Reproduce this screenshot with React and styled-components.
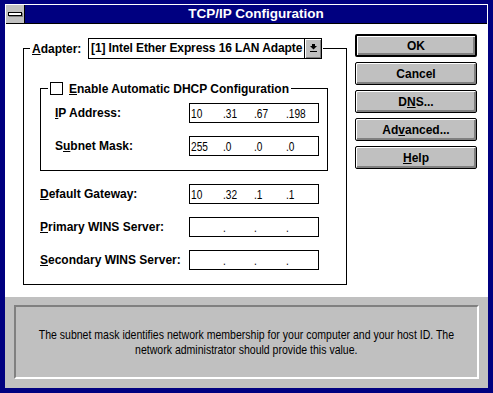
import React from 'react'
import styled, {createGlobalStyle} from 'styled-components'

const GlobalStyle = createGlobalStyle`
  html, body {
    margin: 0;
    padding: 0;
    background: #000080;
  }
  body {
    font-family: "Liberation Sans", Arial, sans-serif;
  }
`

const Window = styled.div`
  width: 493px;
  height: 393px;
  box-sizing: border-box;
  border: 5px solid #000080;
  border-top-width: 4px;
  background: #fff;
  display: flex;
  flex-direction: column;
  overflow: hidden;
`

// Title bar

const TitleBar = styled.div`
  display: flex;
  height: 18px;
  margin: 1px 1px 0 1px;
  border-bottom: 1px solid #000;
`

const SysMenu = styled.div`
  width: 18px;
  background: #c0c0c0;
  border-right: 1px solid #000;
  display: flex;
  align-items: center;
  justify-content: center;
`

const SysBar = styled.span`
  width: 12px;
  height: 2px;
  background: #fff;
  border: 1px solid #000;
  box-shadow: 1px 1px 0 #808080;
`

const Title = styled.div`
  flex: 1;
  background: #000080;
  color: #fff;
  font-weight: bold;
  font-size: 13.5px;
  line-height: 18px;
  text-align: center;
`

// Body

const Body = styled.div`
  flex: 1;
  display: flex;
  align-items: flex-start;
  padding: 10px 11px 0 18px;
  gap: 8px;
`

const Group = styled.fieldset`
  margin: ${p => p.$top || 0}px 0 0 0;
  padding: 0;
  border: 1px solid #000;
  min-width: 0;
  width: ${p => p.$width}px;
  box-sizing: border-box;
`

const Legend = styled.legend`
  margin-left: ${p => p.$indent}px;
  padding: 0 ${p => p.$padRight || 1}px 0 2px;
`

const LegendRow = styled.span`
  display: flex;
  align-items: center;
  height: ${p => p.$height}px;
`

const GroupContent = styled.div`
  display: flex;
  flex-direction: column;
  gap: ${p => p.$gap}px;
  padding: ${p => p.$pad};
`

const Label = styled.span`
  font-weight: bold;
  font-size: 12px;
  color: #000;
  white-space: nowrap;
  width: ${p => (p.$width ? `${p.$width}px` : 'auto')};
  flex-shrink: 0;
`

const Combo = styled.div`
  display: flex;
  width: 234px;
  height: 21px;
  box-sizing: border-box;
  border: 1px solid #000;
  background: #fff;
`

const ComboText = styled.div`
  flex: 1;
  overflow: hidden;
  white-space: nowrap;
  font-weight: bold;
  font-size: 12px;
  letter-spacing: -0.1px;
  line-height: 19px;
  padding-left: 2px;
`

const DropButton = styled.div`
  width: 16px;
  border-left: 1px solid #000;
  background: #c0c0c0;
  box-shadow: inset 1px 1px 0 #fff, inset -1px -1px 0 #808080;
  display: flex;
  align-items: center;
  justify-content: center;
`

const CheckBox = styled.span`
  width: 13px;
  height: 13px;
  box-sizing: border-box;
  border: 1px solid #000;
  background: #fff;
  margin-right: 6px;
`

const FieldRow = styled.div`
  display: flex;
  align-items: center;
  height: 20px;
`

const AddressBox = styled.div`
  display: flex;
  align-items: center;
  width: 130px;
  height: 20px;
  box-sizing: border-box;
  border: 1px solid #000;
  background: #fff;
  padding-left: 1px;
`

const Octet = styled.span`
  width: 31.5px;
  flex-shrink: 0;
  white-space: pre;
`

// Arial Narrow is not installed, so the regular face is squeezed
const NarrowText = styled.span`
  display: inline-block;
  font-size: ${p => p.$size || 12.5}px;
  color: #000;
  white-space: pre;
  transform: scaleX(0.81);
  transform-origin: ${p => p.$origin || 'left'} center;
`

// Buttons

const ButtonColumn = styled.div`
  display: flex;
  flex-direction: column;
  gap: 5px;
  width: 122px;
`

const Button = styled.div`
  height: 23px;
  box-sizing: border-box;
  border: ${p => (p.$default ? 2 : 1)}px solid #000;
  border-radius: 2px;
  background: #c0c0c0;
  box-shadow: inset 1px 1px 0 #fff, inset -2px -2px 0 #808080;
  display: flex;
  align-items: center;
  justify-content: center;
  font-weight: bold;
  font-size: 12px;
  color: #000;
`

// Status panel

const StatusPanel = styled.div`
  height: 91px;
  box-sizing: border-box;
  background: #c0c0c0;
  padding: 8px 9px 9px 9px;
  display: flex;
`

const HintBox = styled.div`
  flex: 1;
  min-width: 0;
  border-top: 2px solid #808080;
  border-left: 2px solid #808080;
  border-bottom: 2px solid #fff;
  border-right: 2px solid #fff;
  display: flex;
  flex-direction: column;
  align-items: center;
  justify-content: center;
  line-height: 15px;
`

const DropArrow = () => (
  <svg width="7" height="9" viewBox="0 0 7 9">
    <rect x="2" y="0" width="3" height="2" fill="#000" />
    <polygon points="0,2 7,2 3.5,5.5" fill="#000" />
    <rect x="0" y="7" width="7" height="1" fill="#000" />
  </svg>
)

const Address = ({octets, labelWidth, label}) => (
  <FieldRow>
    <Label $width={labelWidth}>{label}</Label>
    <AddressBox>
      {octets.map((o, i) => (
        <Octet key={i}>
          <NarrowText>{i === 0 ? o : '.' + o}</NarrowText>
        </Octet>
      ))}
    </AddressBox>
  </FieldRow>
)

const empty = ['', '', '', '']

export default function App() {
  return (
    <>
      <GlobalStyle />
      <Window>
        <TitleBar>
          <SysMenu>
            <SysBar />
          </SysMenu>
          <Title>TCP/IP Configuration</Title>
        </TitleBar>

        <Body>
          <Group $width={324} $top={4}>
            <Legend $indent={6}>
              <LegendRow $height={21}>
                <Label $width={56}>
                  <u>A</u>dapter:
                </Label>
                <Combo>
                  <ComboText>[1] Intel Ether Express 16 LAN Adapte</ComboText>
                  <DropButton>
                    <DropArrow />
                  </DropButton>
                </Combo>
              </LegendRow>
            </Legend>

            <GroupContent $gap={13} $pad="0 18px 14px 16px">
              <Group $width={288} $top={22}>
                <Legend $indent={7} $padRight={2}>
                  <LegendRow $height={15}>
                    <CheckBox />
                    <Label>
                      <u>E</u>nable Automatic DHCP Configuration
                    </Label>
                  </LegendRow>
                </Legend>
                <GroupContent $gap={13} $pad="7px 0 14px 14px">
                  <Address
                    label={<><u>I</u>P Address:</>}
                    labelWidth={134}
                    octets={['10', '31', '67', '198']}
                  />
                  <Address
                    label={<>S<u>u</u>bnet Mask:</>}
                    labelWidth={134}
                    octets={['255', '0', '0', '0']}
                  />
                </GroupContent>
              </Group>

              <Address
                label={<><u>D</u>efault Gateway:</>}
                labelWidth={149}
                octets={['10', '32', '1', '1']}
              />
              <Address
                label={<><u>P</u>rimary WINS Server:</>}
                labelWidth={149}
                octets={empty}
              />
              <Address
                label={<><u>S</u>econdary WINS Server:</>}
                labelWidth={149}
                octets={empty}
              />
            </GroupContent>
          </Group>

          <ButtonColumn>
            <Button $default>OK</Button>
            <Button>Cancel</Button>
            <Button>
              D<u>N</u>S...
            </Button>
            <Button>
              Ad<u>v</u>anced...
            </Button>
            <Button>
              <u>H</u>elp
            </Button>
          </ButtonColumn>
        </Body>

        <StatusPanel>
          <HintBox>
            <NarrowText $size={13} $origin="center">
              The subnet mask identifies network membership for your computer and your host ID. The
            </NarrowText>
            <NarrowText $size={13} $origin="center">
              network administrator should provide this value.
            </NarrowText>
          </HintBox>
        </StatusPanel>
      </Window>
    </>
  )
}
